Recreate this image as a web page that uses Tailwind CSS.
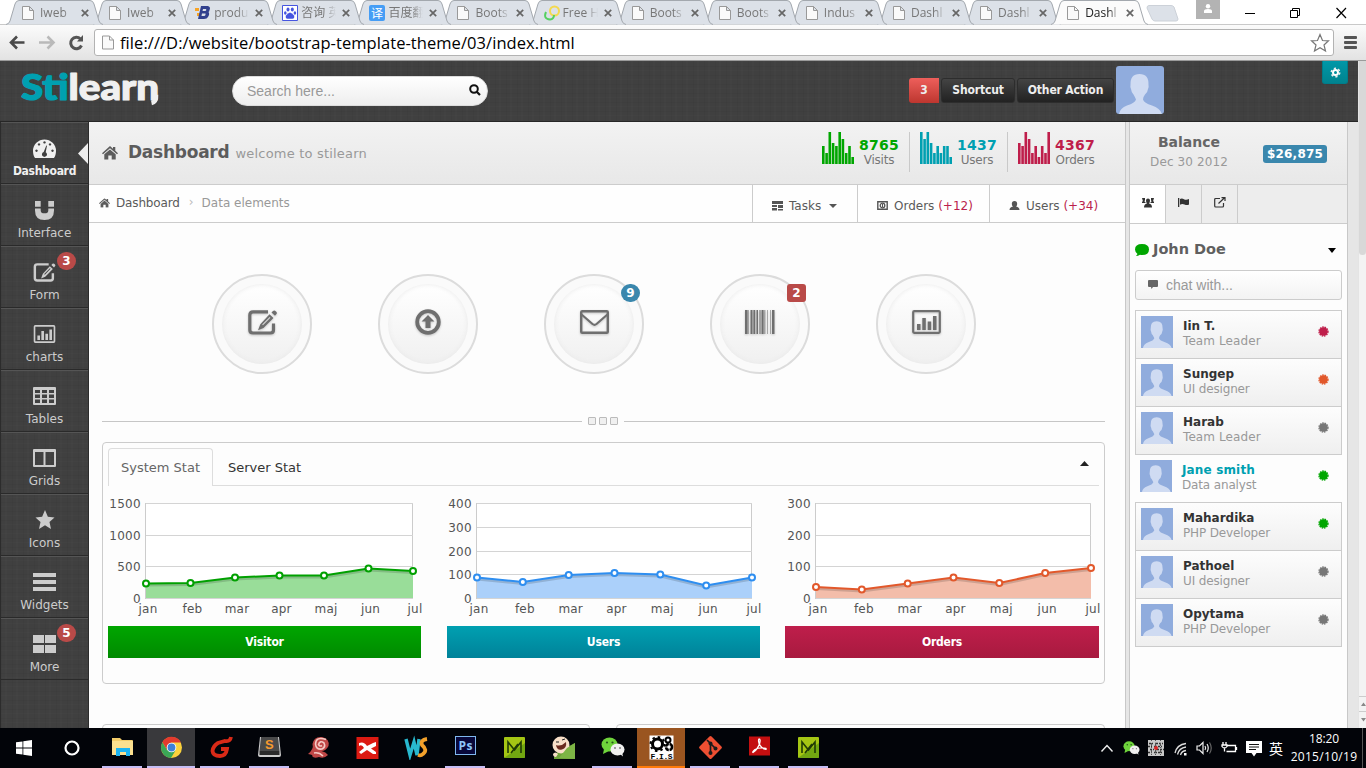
<!DOCTYPE html>
<html lang="en">
<head>
<meta charset="utf-8">
<title>Dashboard - Stilearn</title>
<script src="https://cdn.jsdelivr.net/npm/@tailwindcss/browser@4"></script>
</head>
<body class="w-[1366px] h-[768px] overflow-hidden bg-white flex flex-col font-['DejaVu_Sans',sans-serif] text-[12px] text-[#666]">

<!-- shared symbols -->
<svg class="hidden">
  <defs>
    <pattern id="wave" width="10" height="5" patternUnits="userSpaceOnUse"><path d="M0 2Q2.500 0 5 2T10 2" fill="none" stroke="#dedede" stroke-width=".9"/></pattern>
  </defs>
  <symbol id="i-gauge" viewBox="0 0 23 19"><path fill-rule="evenodd" d="M2 19C.6 17 0 14.500 0 12A11.500 11.500 0 0 1 23 12C23 14.500 22.400 17 21 19ZM11.500 2.200a1.200 1.200 0 1 0 .01 0ZM6 4.200a1.200 1.200 0 1 0 .01 0ZM17 4.200a1.200 1.200 0 1 0 .01 0ZM3.500 10.500a1.200 1.200 0 1 0 .01 0ZM19.500 10.500a1.200 1.200 0 1 0 .01 0ZM13.300 6.500L10.700 13a2.500 2.500 0 1 0 2 .2L14 6.800Z"/></symbol>
  <symbol id="i-magnet" viewBox="0 0 20 20"><path d="M0 0H6V6H0ZM14 0H20V6H14ZM0 8H6V10Q6 13 10 13T14 10V8H20V10Q20 20 10 20T0 10Z"/></symbol>
  <symbol id="i-edit" viewBox="0 0 29 25"><path d="M20 1.800H5Q1.800 1.800 1.800 5V20Q1.800 23 5 23H22.500Q25.500 23 25.500 20V13.500" fill="none" stroke="currentColor" stroke-width="3.200"/><path fill-rule="evenodd" d="M21.500 4.200L25.500 8L15.500 18L10 20.300L12.300 14.300ZM21.700 7L14.200 14.600L14.900 15.300L22.400 7.700ZM23.500 2.500L25 1Q26.500 0 28 1.500T28.500 4L27 5.800Z"/></symbol>
  <symbol id="i-chart" viewBox="0 0 29 24"><rect x="1.200" y="1.200" width="26.600" height="21.600" rx="1" fill="none" stroke="currentColor" stroke-width="2.200"/><path d="M5 14H8.500V20H5ZM10.300 8H13.800V20H10.300ZM15.700 11.500H19.200V20H15.700ZM21 6H24.500V20H21Z"/></symbol>
  <symbol id="i-table" viewBox="0 0 23 18"><path fill-rule="evenodd" d="M1 0H22Q23 0 23 1V17Q23 18 22 18H1Q0 18 0 17V1Q0 0 1 0ZM2 3V6H7V3ZM9 3V6H14V3ZM16 3V6H21V3ZM2 7.500V11H7V7.500ZM9 7.500V11H14V7.500ZM16 7.500V11H21V7.500ZM2 12.500V16H7V12.500ZM9 12.500V16H14V12.500ZM16 12.500V16H21V12.500Z"/></symbol>
  <symbol id="i-grid" viewBox="0 0 23 18"><path fill-rule="evenodd" d="M1 0H22Q23 0 23 1V17Q23 18 22 18H1Q0 18 0 17V1Q0 0 1 0ZM2 3V16H10.500V3ZM12.500 3V16H21V3Z"/></symbol>
  <symbol id="i-star" viewBox="0 0 22 21"><path d="M11 0L14 7L21 7.800L15.700 12.500L17.300 20L11 16L4.700 20L6.300 12.500L1 7.800L8 7Z"/></symbol>
  <symbol id="i-bars" viewBox="0 0 23 18"><path d="M0 0H23V4H0ZM0 7H23V11H0ZM0 14H23V18H0Z"/></symbol>
  <symbol id="i-four" viewBox="0 0 23 18"><path d="M0 0H11V8H0ZM12 0H23V8H12ZM0 10H11V18H0ZM12 10H23V18H12Z"/></symbol>
  <symbol id="i-home" viewBox="0 0 16 14"><path d="M8 0L11 2.700V1H13.300V4.700L16 7.300L15 8.300L8 2.300L1 8.300L0 7.300ZM8 3.500L13.700 8.300V13.500H9.700V9.500H6.300V13.500H2.300V8.300Z"/></symbol>
  <symbol id="i-up" viewBox="0 0 26 26"><circle cx="13" cy="13" r="10.800" fill="none" stroke="currentColor" stroke-width="3.800"/><path d="M13 6L19.500 12.500H15.500V19H10.500V12.500H6.500Z"/></symbol>
  <symbol id="i-mail" viewBox="0 0 29 24"><rect x="1.200" y="1.200" width="26.600" height="21.600" rx="1" fill="none" stroke="currentColor" stroke-width="2.400"/><path d="M1 4L12.500 14Q14.500 15.700 16.500 14L28 4" fill="none" stroke="currentColor" stroke-width="2.200"/></symbol>
  <symbol id="i-barcode" viewBox="0 0 30 24"><path d="M0 0H2.500V24H0ZM5.500 0H7V24H5.500ZM8.500 0H10V24H8.500ZM12 0H13V24H12ZM16.500 0H18.500V24H16.500ZM27 0H29.500V24H27Z"/><path opacity=".55" d="M2.500 0H4V24H2.500ZM7 0H8.500V24H7ZM10.500 0H12V24H10.500ZM14 0H16V24H14ZM18.500 0H20.500V24H18.500ZM22 0H23V24H22ZM25 0H26V24H25Z"/></symbol>
  <symbol id="i-avatar" viewBox="0 0 48 48"><path fill="#90acdd" d="M0 0H48V48H0Z"/><path fill="#cfdbf2" d="M3 48Q4 42 11 39.500Q19 37 20 33.500Q19 31 17.500 28.500Q15.500 27 15 23Q14 21 14.500 19Q14 8 23.500 8T32.500 19Q33 21 32 23Q31.500 27 29 28.500Q27 31 27 33.500Q28 37 36 39.500Q44 42 46 48Z"/></symbol>
  <symbol id="i-doc" viewBox="0 0 12 14"><path d="M.5.5H7.500L11.500 4.500V13.500H.5ZM7.500.5V4.500H11.500" fill="#fafafa" stroke="#999"/></symbol>
  <symbol id="i-burst" viewBox="0 0 10 10"><circle cx="5" cy="5" r="3.900" /><circle cx="5" cy="5" r="4.100" fill="none" stroke="currentColor" stroke-width="1.200" stroke-dasharray="1.400 .8"/></symbol>
  <symbol id="i-wechat" viewBox="0 0 24 20"><ellipse cx="8.500" cy="7.500" rx="8" ry="7" fill="#6fd43c"/><path d="M3 12L2 17L8 14" fill="#6fd43c"/><circle cx="6" cy="5.500" r="1.100" fill="#26571b"/><circle cx="11.500" cy="5.500" r="1.100" fill="#26571b"/><ellipse cx="16.500" cy="12.500" rx="7" ry="6" fill="#f0f0f0"/><path d="M19 17L22 19.500L21 15" fill="#f0f0f0"/><circle cx="14" cy="11" r=".9" fill="#777"/><circle cx="19" cy="11" r=".9" fill="#777"/></symbol>
</svg>

<!-- tab strip -->
<div class="relative h-[24px] shrink-0 flex bg-white">
  <div id="tabs" class="flex pl-[6px]"></div>
  <svg class="ml-[8px] mt-[5px]" width="33" height="17"><path d="M3 .5H25Q27 .5 28 2L32 14Q32 16 30 16H9Q7 16 6 14L1 3Q1 .5 3 .5Z" fill="#dce1e8" stroke="#ccd1d8"/></svg>
  <div class="absolute left-[1196px] top-0 w-[24px] h-[19px] bg-[#b3b3b3] flex justify-center pt-[4px]"><svg width="10" height="9" fill="#fff"><circle cx="5" cy="2.200" r="2.200"/><path d="M1 9V7Q1 5 5 5T9 7V9Z"/></svg></div>
  <svg class="absolute left-[1240px] top-[5px]" width="112" height="16" fill="none" stroke="#000"><path d="M5 8.500H15M50.500 5.500H57.500V12.500H50.500ZM52.500 5V3.500H59.500V10.500H58" /><path d="M96.500 3L106 13M106 3L96.500 13" stroke-width="1.200"/></svg>
</div>

<!-- toolbar -->
<div class="h-[37px] shrink-0 flex items-center bg-linear-to-b from-[#fbfbfb] to-[#e3e3e3] border-b border-[#9b9b9b] border-t border-t-[#c9c9c9]">
  <svg class="ml-[9px]" width="80" height="20" fill="none" stroke-width="2.600"><path d="M15.500 9.500H3M8 3.500L2 9.500L8 15.500" stroke="#4a4a4a"/><path d="M30 9.500H43M38.500 3.500L44.500 9.500L38.500 15.500" stroke="#b9b9b9"/><path d="M71.500 6A5.700 5.700 0 1 0 72.500 12.500" stroke="#555" stroke-width="3"/><path d="M68 8.500H74V2Z" fill="#555"/></svg>
  <div class="ml-[5px] w-[1240px] h-[27px] rounded-[3px] border border-[#b3b3b3] bg-white flex items-center">
    <svg class="ml-[7px] shrink-0" width="12" height="15"><use href="#i-doc"/></svg>
    <div class="ml-[6px] grow text-black text-[16.500px] leading-[24px] tracking-[0.06px] font-['Open_Sans',sans-serif] whitespace-nowrap">file:///D:/website/bootstrap-template-theme/03/index.html</div>
    <svg class="mr-[3px]" width="20" height="20" viewBox="0 0 20 20"><path d="M10 1.500L12.500 7.500L18.500 7.800L14 12L15.500 18L10 14.700L4.500 18L6 12L1.500 7.800L7.500 7.500Z" fill="none" stroke="#777" stroke-width="1.200"/></svg>
  </div>
  <svg class="ml-[10px]" width="13" height="14" fill="#555"><rect width="13" height="3" rx="1"/><rect y="5" width="13" height="3" rx="1"/><rect y="10" width="13" height="3" rx="1"/></svg>
</div>

<!-- page -->
<div class="h-[667px] shrink-0 flex overflow-hidden">
<div class="w-[1358px] flex flex-col shrink-0">
  <!-- dark header -->
  <header class="relative h-[61px] shrink-0 bg-[#404040] border-b border-[#262626] flex bg-[repeating-linear-gradient(90deg,rgba(0,0,0,.035)_0_1px,transparent_1px_4px,rgba(255,255,255,.012)_4px_6px,transparent_6px_11px),repeating-linear-gradient(0deg,rgba(0,0,0,.035)_0_1px,transparent_1px_5px,rgba(255,255,255,.012)_5px_6px,transparent_6px_9px)]">
    <svg class="ml-[21px] mt-[6px] shrink-0" width="145" height="46" font-family="Lato" font-weight="900" font-size="36" stroke-width="1.200" stroke-linejoin="round"><text x="0" y="33" textLength="138" lengthAdjust="spacingAndGlyphs"><tspan fill="#00a0b1" stroke="#00a0b1">Sti</tspan><tspan fill="#f0f0f0" stroke="#f0f0f0">learn</tspan></text><path d="M135 28Q135.500 35 130.500 36" fill="none" stroke="#f0f0f0" stroke-width="4.500"/></svg>
    <div class="ml-[66px] mt-[15px] w-[256px] h-[30px] rounded-full bg-linear-to-b from-white to-[#eee] border border-[#ddd] flex items-center justify-between pl-[14px] pr-[6px] text-[14px] text-[#999] font-['Liberation_Sans',sans-serif]">Search here...
      <svg class="-mt-[3px]" width="12" height="12"><circle cx="5" cy="5" r="3.800" fill="none" stroke="#111" stroke-width="2"/><path d="M7.500 7.500L11 11" stroke="#111" stroke-width="2.200"/></svg></div>
    <div class="ml-[421px] mt-[5px] flex gap-[2px] items-center h-[48px] text-[#eee] font-bold font-['DejaVu_Sans_Condensed','DejaVu_Sans',sans-serif] tracking-[-0.15px]">
      <div class="w-[30px] h-[25px] rounded-l-[3px] bg-linear-to-b from-[#ee5f5b] to-[#bd362f] flex items-center justify-center">3</div>
      <div class="w-[74px] h-[25px] rounded-[3px] bg-linear-to-b from-[#444] to-[#222] border border-[#2d2d2d] flex items-center justify-center">Shortcut</div>
      <div class="w-[97px] h-[25px] rounded-[3px] bg-linear-to-b from-[#444] to-[#222] border border-[#2d2d2d] flex items-center justify-center whitespace-nowrap">Other Action</div>
      <svg class="rounded-[3px]" width="48" height="48"><use href="#i-avatar"/></svg>
    </div>
    <div class="ml-[158px] w-[26px] h-[23px] rounded-b-[3px] bg-linear-to-b from-[#0098a8] to-[#00838f] border border-t-0 border-[#007d8a] flex items-center justify-center"><svg width="11" height="11"><circle cx="5.500" cy="5.500" r="2.500" fill="none" stroke="#fff" stroke-width="2"/><circle cx="5.500" cy="5.500" r="4.200" fill="none" stroke="#eee" stroke-width="1.600" stroke-dasharray="2.200 2.200"/></svg></div>
  </header>

  <div class="flex h-[606px]">
    <!-- sidebar -->
    <nav id="nav" class="w-[89px] shrink-0 bg-[#404040] border-l border-r border-l-[#2c2c2c] border-r-[#2c2c2c] flex flex-col bg-[repeating-linear-gradient(90deg,rgba(0,0,0,.035)_0_1px,transparent_1px_4px,rgba(255,255,255,.012)_4px_6px,transparent_6px_11px),repeating-linear-gradient(0deg,rgba(0,0,0,.035)_0_1px,transparent_1px_5px,rgba(255,255,255,.012)_5px_6px,transparent_6px_9px)]"></nav>

    <!-- main content -->
    <main class="w-[1037px] shrink-0 flex flex-col bg-[#fdfdfd] border-r border-[#c8c8c8]">
      <div class="relative h-[63px] shrink-0 border-b border-[#ccc] bg-linear-to-b from-[#f2f2f2] to-[#e8e8e8] flex">
        <svg class="absolute inset-0" width="1036" height="62"><rect width="1036" height="62" fill="url(#wave)"/></svg>
        <div class="relative flex items-center grow pl-[13px] pb-px">
          <svg width="16" height="14" fill="#5c5c5c"><use href="#i-home"/></svg>
          <div class="ml-[10px] text-[17px] font-bold tracking-[-0.25px] text-[#5c5c5c]">Dashboard</div>
          <div class="ml-[6px] mt-[3px] text-[13px] tracking-[0.2px] text-[#999]">welcome to stilearn</div>
        </div>
        <div id="stats" class="relative flex mt-[10px] h-[40px]"></div>
      </div>
      <div class="h-[38px] shrink-0 border-b border-[#ccc] bg-[#fefefe] flex text-[#5a5a5a]">
        <div class="flex grow items-center pl-[10px] pb-px">
          <svg width="11" height="10" viewBox="0 0 16 14" fill="#5c5c5c"><use href="#i-home"/></svg>
          <span class="ml-[6px] tracking-[-0.15px]">Dashboard</span><span class="ml-[9px] mr-[8px] text-[#bbb] -mt-[2px]">›</span><span class="text-[#999]">Data elements</span>
        </div>
        <div class="w-[105px] border-l border-[#ccc] flex items-center pl-[19px] pt-[4px]"><svg class="mr-[6px]" width="11" height="10" fill="#555"><path d="M0 0H11V3H0ZM0 4H5V6H0ZM6 4H11V7H6ZM0 7H5V9.500H0ZM6 8H11V9.500H6Z"/></svg>Tasks<svg class="ml-[8px]" width="8" height="4" fill="#555"><path d="M0 0H8L4 4Z"/></svg></div>
        <div class="w-[132px] border-l border-[#ccc] flex items-center pl-[19px] pt-[4px] whitespace-nowrap"><svg class="mr-[6px] shrink-0" width="11" height="9"><path d="M.8.800H10.200V8.200H.8Z" fill="none" stroke="#555" stroke-width="1.400"/><circle cx="5.500" cy="4.500" r="2.300" fill="none" stroke="#555" stroke-width="1.300"/><path d="M5.500 3V6" stroke="#555"/></svg>Orders&nbsp;<span class="text-[#bb1e4c]">(+12)</span></div>
        <div class="w-[136px] border-l border-[#ccc] flex items-center pl-[19px] pt-[4px] whitespace-nowrap"><svg class="mr-[6px] shrink-0" width="11" height="9" fill="#555"><path d="M2.800 3Q2.800 0 5.500 0T8.200 3Q8 5 7 5.500Q10.500 6 10.500 9H.5Q.5 6 4 5.500Q3 5 2.800 3Z"/></svg>Users&nbsp;<span class="text-[#bb1e4c]">(+34)</span></div>
      </div>

      <div id="circles" class="flex gap-[66px] pl-[123px] mt-[51px] text-[#6f6f6f]"></div>

      <div class="flex items-center mt-[42px] ml-[13px] h-[10px] w-[1003px] shrink-0">
        <div class="h-px w-[480px] bg-[#c6c6c6]"></div>
        <div class="flex gap-[3px] px-[6px]"><i class="size-[8px] border border-[#bbb] rounded-[1px] bg-[#f0f0f0]"></i><i class="size-[8px] border border-[#bbb] rounded-[1px] bg-[#f0f0f0]"></i><i class="size-[8px] border border-[#bbb] rounded-[1px] bg-[#f0f0f0]"></i></div>
        <div class="h-px grow bg-[#c6c6c6]"></div>
      </div>

      <section class="mt-[16px] ml-[13px] w-[1003px] h-[242px] shrink-0 rounded-[4px] border border-[#ccc] px-[5px] pt-[5px]">
        <div class="flex h-[38px] text-[13px] relative">
          <div class="w-[105px] rounded-t-[4px] border border-b-0 border-[#ddd] flex items-center justify-center text-[#666]">System Stat</div>
          <div class="grow border-b border-[#ddd] flex items-center justify-between pl-[15px] pr-[10px] text-[#333]"><span class="pt-[2px]">Server Stat</span><svg class="-mt-[6px]" width="9" height="5" fill="#222"><path d="M0 5H9L4.500 0Z"/></svg></div>
        </div>
        <div class="flex gap-[26px] pt-[11px]" id="charts"></div>
      </section>

      <div class="flex gap-[26px] mt-[40px] ml-[13px] h-[40px] shrink-0">
        <div class="w-[488px] border border-[#ccc] rounded-[4px]"></div>
        <div class="w-[489px] border border-[#ccc] rounded-[4px]"></div>
      </div>
    </main>

    <div class="w-[3px] shrink-0 bg-[#e6e6e6]"></div>

    <!-- right panel -->
    <aside class="w-[219px] shrink-0 border-x border-[#c8c8c8] bg-[#fdfdfd] flex flex-col">
      <div class="relative h-[63px] shrink-0 border-b border-[#ccc] bg-linear-to-b from-[#f2f2f2] to-[#e8e8e8]">
        <svg class="absolute inset-0" width="217" height="62"><rect width="217" height="62" fill="url(#wave)"/></svg>
        <div class="relative flex items-center h-[62px] pl-[19px] pb-[2px]">
          <div class="w-[80px] flex flex-col items-center whitespace-nowrap"><div class="text-[14px] leading-[20px] font-bold text-[#666]">Balance</div><div class="leading-[20px] text-[#999] tracking-[0.1px]">Dec 30 2012</div></div>
          <div class="ml-[34px] mt-[3px] w-[64px] h-[18px] rounded-[3px] bg-[#3a87ad] text-white font-bold text-[12px] tracking-[0.2px] flex items-center justify-center">$26,875</div>
        </div>
      </div>
      <div class="relative h-[39px] shrink-0 border-b border-[#ccc] bg-[#ededed] flex">
        <svg class="absolute inset-0" width="217" height="38"><rect width="217" height="38" fill="url(#wave)"/></svg>
        <div class="relative w-[36px] border-r border-[#ccc] bg-white flex justify-center pt-[13px]"><svg width="12" height="10" fill="#333"><path d="M4 2.500Q4 .5 6 .5T8 2.500Q8 4.500 7 5.500Q10 6 10 9.500H2Q2 6 5 5.500Q4 4.500 4 2.500ZM0 0H3V2L2.500 3.500L4 5H0V3.500H1ZM12 0H9V2L9.500 3.500L8 5H12V3.500H11Z"/></svg></div>
        <div class="relative w-[36px] border-r border-[#ccc] flex justify-center pt-[13px]"><svg width="11" height="9" fill="#333"><path d="M0 0H1.300V9H0ZM2 1Q4 0 6 1.200T11 1V6.500Q9 7.500 6.500 6.500T2 6.800Z"/></svg></div>
        <div class="relative w-[36px] border-r border-[#ccc] flex justify-center pt-[12px]"><svg width="12" height="11" fill="none" stroke="#333" stroke-width="1.200"><path d="M6 1.500H1.700Q.7 1.500.7 2.500V9Q.7 10 1.700 10H8.500Q9.500 10 9.500 9V6M4.500 6.500L10.500.8M7.500.6H11V4"/></svg></div>
      </div>
      <div class="h-[46px] pl-[5px] pr-[11px] pt-[5px] flex items-center"><svg width="14" height="12" fill="#00a600"><path d="M7 0Q14 0 14 5.500T7 11Q6 11 5 10.700Q3 12 1 12L2.500 10Q0 8 0 5.500Q0 0 7 0Z"/></svg><span class="ml-[4px] grow text-[14.500px] font-bold text-[#5f5f5f]">John Doe</span><svg class="mt-[2px]" width="8" height="5" fill="#000"><path d="M0 0H8L4 5Z"/></svg></div>
      <div class="ml-[5px] w-[207px] h-[30px] shrink-0 rounded-[3px] border border-[#ccc] bg-linear-to-b from-white to-[#f3f3f3] flex items-center pl-[12px] text-[14px] text-[#999] font-['Liberation_Sans',sans-serif]"><svg class="mr-[8px] -mt-[2px]" width="10" height="9" fill="#666"><path d="M1 0H9Q10 0 10 1V6Q10 7 9 7H5L3.500 9L3 7H1Q0 7 0 6V1Q0 0 1 0Z"/></svg>chat with...</div>
      <div id="people" class="mt-[10px] ml-[5px] w-[207px] border-t border-[#ccc]"></div>
    </aside>
    <div class="grow bg-[#e6e6e6]"></div>
  </div>
</div>
<!-- scrollbar -->
<div class="w-[8px] bg-[#f3f3f3] border-l border-[#e4e4e4] flex flex-col justify-between">
  <div class="h-[194px] bg-[#d8d8d8] rounded-b-[4px]"></div>
  <svg width="8" height="32" fill="#888"><path d="M0 .5H8M0 15.500H8" stroke="#ccc"/><path d="M2 10H7L4.500 6.500ZM2 22H7L4.500 25.500Z"/></svg>
</div>
</div>

<!-- taskbar -->
<footer class="h-[40px] shrink-0 bg-[#020409] flex text-white">
  <div class="w-[48px] flex items-center justify-center"><svg width="16" height="16" fill="#fff"><path d="M0 2.300L6.500 1.400V7.600H0ZM7.300 1.300L16 0V7.600H7.300ZM0 8.400H6.500V14.600L0 13.700ZM7.300 8.400H16V16L7.300 14.700Z"/></svg></div>
  <div class="w-[50px] flex items-center pl-[16px]"><svg width="16" height="16"><circle cx="8" cy="8" r="6.500" fill="none" stroke="#fff" stroke-width="2.200"/></svg></div>
  <div id="tasks" class="flex gap-px"></div>
  <div class="flex items-center ml-auto">
    <svg class="mr-[9px]" width="14" height="8" fill="none" stroke="#eee" stroke-width="1.400"><path d="M1.500 7.500L7 1.500L12.500 7.500"/></svg>
    <svg class="mr-[8px]" width="17" height="14" viewBox="0 0 24 20"><use href="#i-wechat"/></svg>
    <svg class="mr-[10px]" width="16" height="16"><path fill="#c9c9c9" d="M0 0H16V16H0Z"/><path d="M1 3.500H16M0 6.500H15M2 9.500H16M0 12.500H14" stroke="#333" stroke-width="1.500" stroke-dasharray="2 1 1 2 3 1"/><path d="M3.500 0V16M7.500 0V16M12.500 0V16" stroke="#555" stroke-dasharray="1 2 3 1"/><circle cx="8" cy="8" r="2" fill="#d92525"/></svg>
    <svg class="mr-[8px] mt-px" width="14" height="14" fill="none" stroke="#ddd" stroke-width="1.300"><path d="M1 11Q3 2.500 12 1.500M3.500 12.500Q5 6 12 5M6.500 13Q7.500 9 12 8.500"/><path d="M10 11H12.500V13.500H10Z" fill="#fff" stroke="none"/></svg>
    <svg class="mr-[8px]" width="17" height="14" fill="none" stroke="#eee" stroke-width="1.200"><path d="M1 5H3.500L7 1.500V12.500L3.500 9H1Z"/><path d="M9 5Q10.300 7 9 9M11 3Q13.500 7 11 11"/><path d="M13.500 1.500Q17 7 13.500 12.500" stroke="#666"/></svg>
    <svg class="mr-[8px]" width="17" height="14" fill="none" stroke="#fff" stroke-width="1.300"><path d="M6.500 4.500H14.500V10.500H5.500M15.500 6V9M2 1V3.500M5 1V3.500M1 4H6V5.500Q5 7 3.500 7T1 5.500ZM3.500 7V10.500"/></svg>
    <svg class="mr-[7px] mt-px" width="16" height="16"><path d="M0 0H16V12H10.500L8 15.500L5.500 12H0Z" fill="#fff"/><path d="M3 3.500H13M3 6H13M3 8.500H10" stroke="#111"/></svg>
    <span class="text-[14px] mr-[7px] font-['Noto_Sans_CJK_SC',sans-serif]">英</span>
    <div class="w-[68px] mr-[4px] text-center whitespace-nowrap font-['Open_Sans',sans-serif] text-[12px] leading-[18px] tracking-[0.3px]"><div class="tracking-[-0.1px]">18:20</div><div>2015/10/19</div></div>
    <div class="w-[1px] h-[40px] bg-[#555] mr-[3px]"></div>
  </div>
</footer>

<script>
const $ = id => document.getElementById(id);
const use = (id, w, h, extra = '') => `<svg width="${w}" height="${h}" fill="currentColor" ${extra}><use href="#i-${id}"/></svg>`;

// Browser tabs
const doc = '<use href="#i-doc" width="12" height="14" x="1" y="1"/>';
const fav = {
  b: '<path d="M0 3H4V6H0ZM2 8H5V11H2Z" fill="#f7a325"/><path d="M6 1H13Q16 2 14.500 5Q14.500 6.500 13.500 7Q15 9 13 12Q12 14 9 14H3ZM8 4L7.500 6H10.500Q12 5 11 4ZM7 8.500L6.500 11H9.500Q11 10 10.500 8.500Z" fill="#32418e" fill-rule="evenodd"/>',
  p: '<path d="M.5.500H15.500V15.500H.5Z" fill="#fff" stroke="#4655e0"/><g fill="#4655e0"><ellipse cx="6" cy="4.500" rx="1.500" ry="2.100"/><ellipse cx="10.300" cy="4.500" rx="1.500" ry="2.100"/><ellipse cx="3.300" cy="8" rx="1.300" ry="1.800"/><ellipse cx="12.900" cy="8" rx="1.300" ry="1.800"/><path d="M8 7.500Q10 8 12 10.500Q13 13.500 10.500 13.700H5.500Q3 13.500 4 10.500Q6 8 8 7.500Z"/></g>',
  t: '<rect width="16" height="16" rx="2" fill="#459df5"/><text x="2" y="12.500" font-size="12" fill="#fff" font-family="Noto Sans CJK SC">译</text>',
  f: '<circle cx="10.500" cy="6" r="4.500" fill="none" stroke="#f4d94e" stroke-width="2"/><path d="M2 7Q-1 14 6 14.500Q10 14 10 10" fill="none" stroke="#55d060" stroke-width="2"/>'
};
const tabs = [['Iweb'],['Iweb'],['produ','b'],['咨询 英','p'],['百度翻','t'],['Boots'],['Free H','f'],['Boots'],['Boots'],['Indus'],['Dashl'],['Dashl'],['Dashl']];
$('tabs').innerHTML = tabs.map(([t, f], i) => {
  const on = i === 12;
  return `<div class="relative w-[87.1px] h-[25px] shrink-0" style="z-index:${on ? 30 : 20 - i}">
    <svg class="absolute left-0 top-0" width="98" height="25"><path d="M0 24.500Q3 24 4 21L9 4Q10 .5 13 .5H84Q87 .5 88 4L93 21Q94 24 97 24.500" fill="${on ? '#fbfbfb' : '#dce1e8'}" stroke="#a3a8ae"/></svg>
    <div class="relative flex items-center pl-[15px] h-[25px]">
      <svg class="shrink-0" width="16" height="16">${f ? fav[f] : doc}</svg>
      <div class="ml-[3px] w-[39px] overflow-hidden whitespace-nowrap text-[12px] leading-[18px] font-['Open_Sans','Noto_Sans_CJK_SC',sans-serif] mask-r-from-60% mask-r-to-90% ${on ? 'text-[#222]' : 'text-[#777]'}">${t}</div>
      <svg class="ml-[2px] shrink-0 mt-px" width="8" height="8"><path d="M.8.800L7.200 7.200M7.200.800L.8 7.200" stroke="#666" stroke-width="1.700"/></svg>
    </div></div>`;
}).join('');

// Side navigation
const nav = [['gauge','Dashboard',23,19],['magnet','Interface',19,19],['edit','Form',23,19,3],['chart','charts',23,18],['table','Tables',23,18],['grid','Grids',23,18],['star','Icons',22,20],['bars','Widgets',23,18],['four','More',23,18,5]];
$('nav').innerHTML = nav.map(([ic, t, w, h, n], i) => `<div class="relative h-[62px] shrink-0 border-t border-t-[#555] border-b border-b-[#2a2a2a] flex flex-col items-center pt-[15px] ${i ? 'text-[#ccc]' : 'text-[#f0f0f0]'}">
  <div class="h-[20px] flex items-center">${use(ic, w, h)}</div>
  <div class="mt-[5px] leading-[16px] ${i ? '' : "font-bold font-['DejaVu_Sans_Condensed'] tracking-[-0.3px]"}">${t}</div>
  ${n ? `<div class="absolute left-[56px] top-[5px] w-[19px] h-[18px] rounded-full bg-[#b94a48] text-white font-bold leading-[18px] text-center">${n}</div>` : ''}
  ${i ? '' : '<svg class="absolute right-0 top-[20px]" width="10" height="21"><path d="M10 0V21L0 10.500Z" fill="#ededed"/></svg>'}
</div>`).join('');

// Header statistics
const stats = [
  ['8765','Visits','#00a600','text-[#00a600]',[18,11,32,21,18,32,25,11,18,7]],
  ['1437','Users','#00a0b1','text-[#00a0b1]',[32,25,32,21,11,18,11,18,18,7]],
  ['4367','Orders','#bf1e4b','text-[#bf1e4b]',[21,18,32,25,11,18,7,18,11,32]]];
$('stats').innerHTML = stats.map(([n, l, c, tc, v], i) => `<div class="flex ${i ? 'border-l border-[#c9c9c9] pl-[10px]' : 'pl-[11px]'} ${i === 2 ? 'w-[118px]' : 'w-[98px]'}">
  <svg class="shrink-0" width="32" height="32" fill="${c}">${v.map((h, k) => `<rect x="${(k * 3.27).toFixed(1)}" y="${32 - h}" width="2.600" height="${h}"/>`).join('')}</svg>
  <div class="ml-[5px] mt-[5px] w-[40px] flex flex-col items-center"><div class="font-bold text-[14px] leading-[16px] tracking-[0.25px] ${tc}">${n}</div><div class="leading-[13px] mt-px text-[#777] tracking-[-0.2px]">${l}</div></div>
</div>`).join('');

// Round shortcuts
const circles = [['edit',29,25],['up',26,26],['mail',29,24,9,'rounded-full bg-[#3a87ad]'],['barcode',30,24,2,'rounded-[3px] bg-[#b94a48]'],['chart',29,24]];
$('circles').innerHTML = circles.map(([ic, w, h, n, b]) => `<div class="relative size-[100px] shrink-0 rounded-full border-2 border-[#dcdcdc] bg-[#fafafa] flex items-center justify-center">
  <div class="size-[80px] rounded-full bg-linear-to-b from-white to-[#f0f0f0] shadow-[inset_0_0_5px_#e8e8e8] flex items-center justify-center pb-[4px]"><div class="drop-shadow-[0_1px_1px_rgba(0,0,0,.2)]">${use(ic, w, h)}</div></div>
  ${n ? `<div class="absolute left-[75px] top-[8px] w-[19px] h-[18px] text-white font-bold leading-[18px] text-center ${b}">${n}</div>` : ''}</div>`).join('');

// Area charts: [label, colour, fill, box classes, button classes, plot left, plot width, scale, values as pixel rows]
const charts = [
  ['Visitor','#00a000','#99dd99','w-[313px]','from-[#00a600] to-[#008a00]',38,267,[1500,1000,500,0],[86.500,86,80.500,78.500,78.500,71.500,74]],
  ['Users','#2e8ef0','#abd0fa','w-[313px]','from-[#00a0b1] to-[#008299]',30,275,[400,300,200,100,0],[80.500,85,78,76,77.500,88.500,80.500]],
  ['Orders','#e2582b','#f3bdaa','w-[314px] -ml-px','from-[#bf1e4b] to-[#a81a3f]',31,275,[300,200,100,0],[90,92.500,86.500,80.500,86,76,71]]];
$('charts').innerHTML = charts.map(([l, c, f, box, g, x, w, s, v]) => {
  const px = i => (x + i * w / 6).toFixed(1);
  const pts = v.map((y, i) => px(i) + ' ' + y).join('L');
  const gy = i => Math.round(6 + i * 95 / (s.length - 1)) + .5;
  return `<div class="${box} shrink-0"><svg class="overflow-visible" width="313" height="129" font-family="DejaVu Sans" font-size="12" fill="#545454">
    <rect x="${x - .5}" y="6.500" width="${w}" height="95" fill="#fff" stroke="#ccc"/>
    ${s.map((n, i) => `<path d="M${x} ${gy(i)}H${x + w}" stroke="#d4d4d4"/><text x="${x - 5}" y="${gy(i) + 4.500}" text-anchor="end" letter-spacing=".3">${n}</text>`).join('')}
    <path d="M${px(0)} 101L${pts}L${px(6)} 101Z" fill="${f}"/>
    <path d="M${pts}" transform="translate(0 1.800)" fill="none" stroke="#000" stroke-opacity=".15" stroke-width="2.500"/>
    <path d="M${pts}" fill="none" stroke="${c}" stroke-width="2"/>
    ${v.map((y, i) => `<circle cx="${px(i)}" cy="${y}" r="3" fill="#fff" stroke="${c}" stroke-width="2"/>`).join('')}
    ${['jan','feb','mar','apr','maj','jun','jul'].map((m, i) => `<text x="${+px(i) + 2}" y="116" text-anchor="middle" letter-spacing=".2">${m}</text>`).join('')}
  </svg><div class="h-[32px] bg-linear-to-b ${g} text-white font-bold text-[12px] tracking-[-0.2px] font-['DejaVu_Sans_Condensed','DejaVu_Sans'] flex items-center justify-center">${l}</div></div>`;
}).join('');

// Contact list
const people = [['Iin T.','Team Leader','text-[#bf1e4b]'],['Sungep','UI designer','text-[#e2582b]'],['Harab','Team Leader','text-[#777]'],['Jane smith','Data analyst','text-[#00a600]'],['Mahardika','PHP Developer','text-[#00a600]'],['Pathoel','UI designer','text-[#777]'],['Opytama','PHP Developer','text-[#777]']];
$('people').innerHTML = people.map(([n, r, c], i) => `<div class="h-[48px] flex items-start pt-[5px] border-b border-[#ccc] pl-[5px] ${i === 3 ? 'bg-[#fdfdfd] pr-[13px]' : 'border-x pr-[12px] bg-linear-to-b from-[#fdfdfd] to-[#efefef]'}">
  ${use('avatar', 32, 32, 'viewBox="0 0 32 32"')}
  <div class="ml-[10px] mt-[2px] grow whitespace-nowrap"><div class="font-bold leading-[16px] ${i === 3 ? 'text-[#00a0b1] tracking-[0.15px]' : 'text-[#333]'}">${n}</div><div class="leading-[14px] text-[#999] ${i === 0 || i === 2 ? 'tracking-[0.1px]' : 'tracking-[-0.15px]'}">${r}</div></div>
  <div class="mt-[10px] ${c}">${use('burst', 11, 11)}</div></div>`).join('');

// Taskbar buttons: [icon markup, underline, background]
const M = '<rect x="2" y="2" width="21" height="21" rx="1" fill="#a5c614"/><path d="M2 23L23 8V23Z" fill="#5c9a10" opacity=".7"/><path d="M6 18V7L12.500 15L19 7V18M9 18L16 9" fill="none" stroke="#1f3b06" stroke-width="1.600"/>';
const icons = [
  ['<path d="M2 3H10L12 5H22Q23 5 23 6V20H2Z" fill="#f3cd6a"/><path d="M2 6H23V20H2Z" fill="#fbe08f"/><path d="M6 13H20V21H16V17H10V21H6Z" fill="#1cb4f2"/>',1],
  ['<circle cx="12.500" cy="12.500" r="10.500" fill="#fbd23c"/><path d="M3.400 7.300A10.500 10.500 0 0 1 22 7.500H12.500L8 15Z" fill="#e33b2e"/><path d="M3.400 7.300A10.500 10.500 0 0 0 12 23L16.500 15.500L12.500 17L8 15Z" fill="#3ba757"/><circle cx="12.500" cy="12.500" r="4.800" fill="#fff"/><circle cx="12.500" cy="12.500" r="3.900" fill="#3f80d8"/>',1,'bg-[#39393c]'],
  ['<path d="M23 2Q22 7 17 6L10 8Q5 11 4.500 16Q5 21 12 21Q18 21 19 14H13" fill="none" stroke="#d92a17" stroke-width="3.800"/>',1],
  ['<path d="M3 2H22L24 20Q24 22 22 22H3Q1 22 1 20Z" fill="#ccc"/><path d="M4 2H21L22.500 16H2.500Z" fill="#4a4a4a"/><path d="M2.500 16H22.500V20H2.500Z" fill="#2a2a2a"/><text x="8" y="13.500" font-size="13" font-weight="700" font-family="Liberation Sans" fill="#f79a2e">S</text>',1],
  ['<path d="M2 19Q8 14 6.500 9Q8 1 16 2Q24 4 22.500 11Q20 16 15.500 16Q20 17 22 20Q18 24 13 22Q8 24 6 21Q8 20 2 19Z" fill="#bf4746"/><path d="M20 4.500Q10 1 9.500 9Q10 15 16 14Q20 12 18 8Q14 5 12.500 9.500Q14 12 16 10.500M8 18Q13 17 17 21" fill="none" stroke="#f5c9c4" stroke-width="1.600"/>'],
  ['<rect x="1.500" y="2" width="22" height="22" fill="#dc1a12"/><path d="M4 8Q9 6 12 11L18 8L21 7V11L16 13.500L21 17V19H18L12 15L6 19L4 17L9 13Q7 9 4 11Z" fill="#fff"/>'],
  ['<path d="M2 4L6 20L10 7L13 20L15 4" fill="none" stroke="#28b9cf" stroke-width="3.400"/><path d="M23 4Q16 5 18 10Q24 15 19 19Q17 21 14 20" fill="none" stroke="#f3a12b" stroke-width="3.800"/>'],
  ['<rect x="2.500" y="1.500" width="20" height="18" fill="#08083a" stroke="#7fb8ee"/><text x="5.500" y="15" font-size="12" font-weight="700" font-family="Open Sans" fill="#8cc6fa" textLength="14">Ps</text>',1],
  [M],
  ['<path d="M3 19L24 8V24H3Z" fill="#6fa33a"/><circle cx="10" cy="10" r="8.500" fill="#f8dfc8"/><path d="M8 23L16 13L24 8V24Z" fill="#7db545"/><path d="M2 19Q4 16 7 19L5 22Q2 22 2 19Z" fill="#f8dfc8"/><path d="M5 10Q10 12 15 7Q16 13 11 14.500T5 10Z" fill="#6b2a1e"/><path d="M5 7H8M11 5L14 4" stroke="#222"/>'],
  ['<use href="#i-wechat" width="24" height="20" x="1" y="2"/>',1],
  ['<path fill="#fff" d="M.5.500H24.500V24.500H.5Z"/><circle cx="8.500" cy="9" r="5" fill="none" stroke="#000" stroke-width="3"/><circle cx="8.500" cy="9" r="7" fill="none" stroke="#000" stroke-width="2" stroke-dasharray="2.500 3"/><circle cx="19" cy="5" r="2.500" fill="none" stroke="#000" stroke-width="2"/><circle cx="20" cy="12" r="3" fill="none" stroke="#000" stroke-width="2.500" stroke-dasharray="4 .8"/><text x="1.500" y="23.500" font-size="8" font-weight="700" font-family="Liberation Mono" fill="#000" textLength="22">F.I.S</text>',2,'bg-[#9a5520]'],
  ['<rect x="4" y="4" width="17" height="17" rx="1.500" fill="#ee4f32" transform="rotate(45 12.500 12.500)"/><g fill="#1b1b1b"><path d="M9 5L12.500 8.500V19M12.500 8.500L18 14" fill="none" stroke="#1b1b1b" stroke-width="1.700"/><circle cx="12.500" cy="8.500" r="2"/><circle cx="12.500" cy="18" r="2"/><circle cx="17.500" cy="13.500" r="2"/></g>',1],
  ['<rect x="2" y="1.500" width="21" height="19" fill="#c40f10"/><path d="M12 4Q14 4 12.500 9Q10 15 6 17.500Q5 17 8 14.500Q13 12 19 13.500Q20 15 17 14Q12 11 11.500 6Q11.500 4 12 4Z" fill="none" stroke="#fff" stroke-width="1.300"/>',1],
  [M,1]];
$('tasks').innerHTML = icons.map(([s, u, b]) => `<div class="w-[48px] h-[40px] flex flex-col items-center pt-[7px] ${b || ''}"><svg width="25" height="25">${s}</svg><div class="mt-auto h-[2px] ${b ? 'w-[48px]' : 'w-[40px]'} ${u === 2 ? 'bg-[#ff7a0a]' : u ? 'bg-[#c5bdf5]' : ''}"></div></div>`).join('');
</script>
</body>
</html>
